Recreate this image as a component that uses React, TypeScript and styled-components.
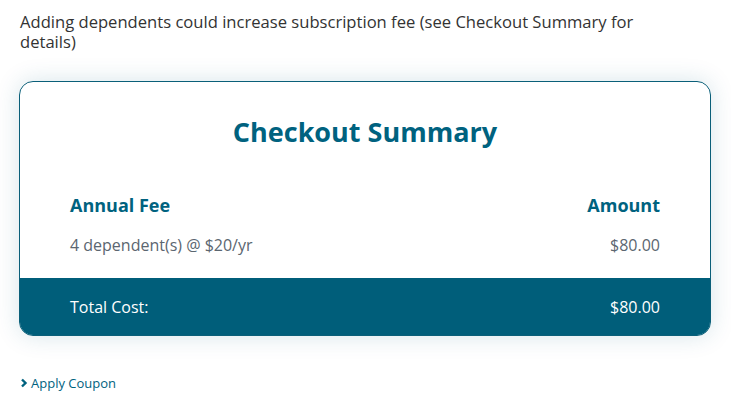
import React from "react";
import styled, { createGlobalStyle } from "styled-components";

const Global = createGlobalStyle`
  body { margin: 0; background: #fff; font-family: "Open Sans", "Lato", sans-serif; }
`;

const Page = styled.div`
  padding: 12px 20px 0 20px;
  width: 731px;
  box-sizing: border-box;
`;

const Notice = styled.p`
  margin: 0;
  font-size: 16.6px;
  line-height: 20px;
  color: #333;
  padding-right: 40px;
`;

const Card = styled.div`
  margin: 29px 0 0 -1px;
  width: 692px;
  box-sizing: border-box;
  border: 1px solid #0a5f79;
  border-radius: 14px;
  overflow: hidden;
  box-shadow: 0 0 24px rgba(0, 95, 122, 0.16);
`;

const Title = styled.h2`
  margin: 0;
  padding: 32px 0 0;
  text-align: center;
  font-size: 27px;
  line-height: 36px;
  font-weight: 700;
  color: #00627f;
`;

const Table = styled.div`
  padding: 44px 50px 24px;
  display: grid;
  grid-template-columns: 1fr auto;
  row-gap: 20px;
`;

const Head = styled.div<{ $right?: boolean }>`
  font-size: 18px;
  font-weight: 700;
  color: #00627f;
  text-align: ${(p) => (p.$right ? "right" : "left")};
  line-height: 22px;
`;

const Cell = styled.div<{ $right?: boolean }>`
  font-size: 16px;
  color: #5b6670;
  line-height: 18px;
  text-align: ${(p) => (p.$right ? "right" : "left")};
`;

const Footer = styled.div`
  background: #005e7a;
  height: 57px;
  padding: 0 50px;
  display: flex;
  align-items: center;
  justify-content: space-between;
  color: #fff;
  font-size: 16px;
`;

const Coupon = styled.button`
  margin-top: 38px;
  display: flex;
  align-items: center;
  gap: 3px;
  padding: 0;
  background: none;
  border: none;
  font-family: inherit;
  font-size: 13px;
  color: #00627f;
  cursor: pointer;
`;

export default function App() {
  return (
    <>
      <Global />
      <Page>
        <Notice>
          Adding dependents could increase subscription fee (see Checkout Summary for details)
        </Notice>
        <Card>
          <Title>Checkout Summary</Title>
          <Table>
            <Head>Annual Fee</Head>
            <Head $right>Amount</Head>
            <Cell>4 dependent(s) @ $20/yr</Cell>
            <Cell $right>$80.00</Cell>
          </Table>
          <Footer>
            <span>Total Cost:</span>
            <span>$80.00</span>
          </Footer>
        </Card>
        <Coupon>
          <svg width="8" height="10" viewBox="0 0 8 10">
            <path d="M2 1.5 L5.5 5 L2 8.5" stroke="#00627f" strokeWidth="2.4" fill="none" />
          </svg>
          Apply Coupon
        </Coupon>
      </Page>
    </>
  );
}
